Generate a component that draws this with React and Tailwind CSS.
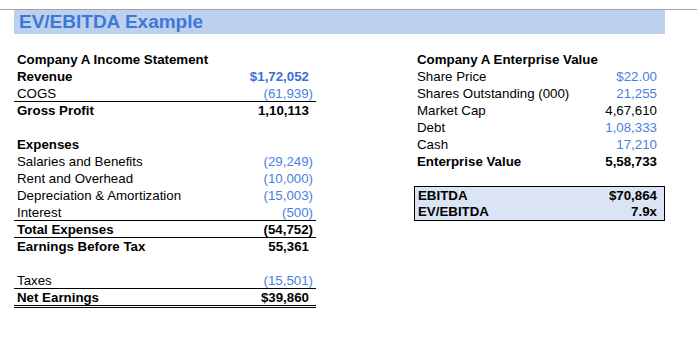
const leftRows = [
    { label: "Company A Income Statement", bold: true },
    { label: "Revenue", value: "$1,72,052", bold: true, blue: true },
    { label: "COGS", value: "(61,939)", blue: true, line: true },
    { label: "Gross Profit", value: "1,10,113", bold: true },
    { blank: true },
    { label: "Expenses", bold: true },
    { label: "Salaries and Benefits", value: "(29,249)", blue: true },
    { label: "Rent and Overhead", value: "(10,000)", blue: true },
    { label: "Depreciation & Amortization", value: "(15,003)", blue: true },
    { label: "Interest", value: "(500)", blue: true, line: true },
    { label: "Total Expenses", value: "(54,752)", bold: true, line: true },
    { label: "Earnings Before Tax", value: "55,361", bold: true },
    { blank: true },
    { label: "Taxes", value: "(15,501)", blue: true, line: true },
    { label: "Net Earnings", value: "$39,860", bold: true, double: true },
];

const rightRows = [
    { label: "Company A Enterprise Value", bold: true },
    { label: "Share Price", value: "$22.00", blue: true },
    { label: "Shares Outstanding (000)", value: "21,255", blue: true },
    { label: "Market Cap", value: "4,67,610" },
    { label: "Debt", value: "1,08,333", blue: true },
    { label: "Cash", value: "17,210", blue: true },
    { label: "Enterprise Value", value: "5,58,733", bold: true },
];

const Row = ({ row, valuePad }) => {
    if (row.blank) return <div className="h-[17px]" />;

    const paren = row.value && row.value.startsWith("(");
    const color = row.blue ? (row.bold ? "text-[#3a6fd6]" : "text-[#4a80e0]") : "text-black";

    let border = "h-[17px]";
    if (row.line) border = "h-[17px] border-b border-black";
    if (row.double) border = "h-[19px] border-b-[3px] border-double border-black";

    return (
        <div className={`flex justify-between leading-[17px] ${border}`}>
            <span className={`pl-[3px] text-black ${row.bold ? "font-bold" : ""}`}>
                {row.label}
            </span>
            {row.value && (
                <span
                    className={`${color} ${row.bold ? "font-bold" : ""} ${
                        paren ? "pr-[3px]" : valuePad
                    }`}
                >
                    {row.value}
                </span>
            )}
        </div>
    );
};

export default function App() {
    return (
        <div
            className="w-[697px] h-[348px] bg-white overflow-hidden text-[13.3px]"
            style={{ fontFamily: '"Liberation Sans", Arial, sans-serif' }}
        >
            <div className="pt-[9px]">
                <div className="border-t border-[#a3a3a3]">
                    {/* Title band */}
                    <div className="ml-[14px] w-[651px] h-[24px] bg-[#bdd0ee] pl-[5px] text-[19px] leading-[24px] font-bold text-[#3c78d8]">
                        EV/EBITDA Example
                    </div>

                    <div className="flex pt-[17px] pl-[14px]">
                        {/* Income statement */}
                        <div className="w-[302px]">
                            {leftRows.map((row, i) => (
                                <Row key={i} row={row} valuePad="pr-[7px]" />
                            ))}
                        </div>

                        {/* Enterprise value */}
                        <div className="ml-[98px] w-[251px]">
                            {rightRows.map((row, i) => (
                                <Row key={i} row={row} valuePad="pr-[8px]" />
                            ))}

                            <div className="mt-[16px] border border-black bg-[#dae4f4] font-bold">
                                <div className="flex justify-between h-[17px] leading-[17px]">
                                    <span className="pl-[3px]">EBITDA</span>
                                    <span className="pr-[7px]">$70,864</span>
                                </div>
                                <div className="flex justify-between h-[16px] leading-[16px]">
                                    <span className="pl-[3px]">EV/EBITDA</span>
                                    <span className="pr-[7px]">7.9x</span>
                                </div>
                            </div>
                        </div>
                    </div>
                </div>
            </div>
        </div>
    );
}
